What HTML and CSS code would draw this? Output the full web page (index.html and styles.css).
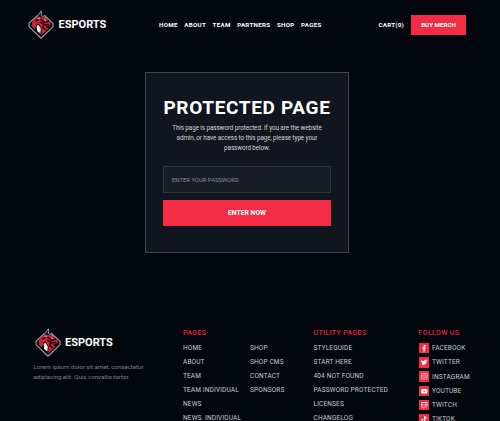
FILE: index.html
```html
<!DOCTYPE html>
<html lang="en">
<head>
<meta charset="utf-8">
<title>Esports – Protected Page</title>
<link rel="stylesheet" href="styles.css">
</head>
<body>
<svg class="defs" width="0" height="0" aria-hidden="true">
  <symbol id="crest" viewBox="0 0 26 29">
    <path d="M9.500 5.300 L1 13.200 L1 16.600 L13 28.200 L25 16.800 L25 13.400 L16 4.800" fill="#07090f" stroke="#a5a9ae" stroke-width="1.100"/>
    <path d="M9 6.500 L4.200 11.200 L4 16.500 L7 19.500 L8.500 14.500 L10.500 13.500 L13.500 18 L13.500 25 L17 22 L20.500 18.500 L17.500 17 L22.500 15 L22.600 12.500 L18.500 8.200 L13.700 6.400Z" fill="#d61f36"/>
    <path d="M9.200 6.600 L13.400.8 L13.400 5.600 L18.500 8.200" fill="#10121a" stroke="#a9abb0" stroke-width=".9"/>
    <path d="M7.500 11 L10.500 9.500 M12.500 9 L17 12.500 L21 11 M12 12 L15.500 14 L15 18 L18 20 M16.500 15 L21 14.500" fill="none" stroke="#10070c" stroke-width="1.500"/>
    <path d="M8.600 16 L10.300 14.800 L12.800 18.500 L12.400 23.500 L9.200 21Z" fill="#f3f0ed"/>
    <path d="M9.500 8.500 L12 8 M16 9.500 L18 11" stroke="#f1d6d6" stroke-width=".7"/>
  </symbol>
</svg>

<header class="header">
  <a class="brand"><svg class="crest"><use href="#crest"/></svg><span class="brand-name">ESPORTS</span></a>
  <nav class="nav"><a>HOME</a><a>ABOUT</a><a>TEAM</a><a>PARTNERS</a><a>SHOP</a><a>PAGES</a></nav>
  <div class="actions"><a class="cart">CART(0)</a><a class="buy">BUY MERCH</a></div>
</header>

<main class="main">
  <form class="card">
    <h1>PROTECTED PAGE</h1>
    <p>This page is password protected. If you are the website<br>admin, or have access to this page, please type your<br>password below.</p>
    <input class="password" type="password" placeholder="ENTER YOUR PASSWORD">
    <button class="submit" type="button">ENTER NOW</button>
  </form>
</main>

<footer class="footer">
  <section class="about">
    <a class="brand"><svg class="crest"><use href="#crest"/></svg><span class="brand-name">ESPORTS</span></a>
    <p>Lorem ipsum dolor sit amet, consectetur<br>adipiscing elit. Quis convallis tortor.</p>
  </section>
  <section class="pages">
    <h2>PAGES</h2>
    <div class="split">
      <ul><li>HOME</li><li>ABOUT</li><li>TEAM</li><li>TEAM INDIVIDUAL</li><li>NEWS</li><li>NEWS&nbsp; INDIVIDUAL</li></ul>
      <ul><li>SHOP</li><li>SHOP CMS</li><li>CONTACT</li><li>SPONSORS</li></ul>
    </div>
  </section>
  <section class="utility">
    <h2>UTILITY PAGES</h2>
    <ul><li>STYLEGUIDE</li><li>START HERE</li><li>404 NOT FOUND</li><li>PASSWORD PROTECTED</li><li>LICENSES</li><li>CHANGELOG</li></ul>
  </section>
  <section class="follow">
    <h2>FOLLOW US</h2>
    <ul class="social">
      <li><svg viewBox="0 0 10 10"><path fill="#fff" d="M4.200 8V5.400h-.9V4.300h.9v-.7c0-1.100.5-1.600 1.400-1.600h.8v1h-.5c-.4 0-.5.2-.5.6v.7h1l-.2 1.100h-.8V8z"/></svg>FACEBOOK</li>
      <li><svg viewBox="0 0 10 10"><path fill="#fff" d="M2.300 2.800c.7.8 1.600 1.200 2.600 1.300-.2-1.400 1.300-2 2.100-1.200l.8-.3-.4.8.5-.1-.6.6C7.300 6.700 4.700 8.500 2 7.200c.7 0 1.300-.2 1.700-.5-.6-.1-1-.4-1.100-.9h.5c-.6-.2-.9-.7-.9-1.200l.5.1c-.6-.5-.7-1.200-.4-1.900z"/></svg>TWITTER</li>
      <li><svg viewBox="0 0 10 10"><g fill="none" stroke="#ffe0e4" stroke-width=".65"><rect x="2.200" y="2.200" width="5.600" height="5.600" rx="1.500"/><circle cx="5" cy="5" r="1.350"/></g><circle cx="6.600" cy="3.400" r=".35" fill="#fff"/></svg>INSTAGRAM</li>
      <li><svg viewBox="0 0 10 10"><rect x="2" y="2.900" width="6" height="4.300" rx="1.100" fill="#fff"/><path fill="#f42c46" d="M4.400 4.100v1.900L6 5.050z"/></svg>YOUTUBE</li>
      <li><svg viewBox="0 0 10 10"><path fill="none" stroke="#fff" stroke-width=".7" d="M2.700 2.400h5v3.200L6.400 6.800H5.200L4 7.900V6.800H2.700zM4.700 3.700v1.500M6.200 3.700v1.500"/></svg>TWITCH</li>
      <li><svg viewBox="0 0 10 10"><path fill="none" stroke="#fff" stroke-width="1.100" d="M5.400 2v4.300a1.300 1.300 0 1 1-1.300-1.300M5.400 2.200c.2 1 .9 1.600 2 1.700"/></svg>TIKTOK</li>
    </ul>
  </section>
</footer>
</body>
</html>
```
FILE: styles.css
```css
* { box-sizing: border-box; }

body {
  margin: 0;
  height: 421px;
  overflow: hidden;
  background: #02060d;
  color: #fff;
  font-family: Roboto, "Liberation Sans", sans-serif;
}

h1, h2, p, ul { margin: 0; padding: 0; }
ul { list-style: none; }
.defs { display: block; }

.header {
  display: grid;
  grid-template-columns: 131px 1fr auto;
  align-items: center;
  height: 49px;
  padding: 0 34px 0 28px;
}

.brand { display: flex; align-items: center; }
.crest { width: 26px; height: 29px; }
.brand-name {
  margin-left: 4.500px;
  font-size: 11px;
  font-weight: 700;
  line-height: 12px;
  letter-spacing: 0;
}

.nav {
  display: flex;
  gap: 6.500px;
  font-size: 6.200px;
  font-weight: 700;
  letter-spacing: .3px;
}

.actions { display: flex; align-items: center; gap: 7px; font-size: 6.200px; font-weight: 700; }
.cart { letter-spacing: .25px; }
.buy {
  width: 55px;
  height: 20px;
  background: #f42c46;
  line-height: 20px;
  text-align: center;
}

.main { display: flex; justify-content: center; height: 279px; padding: 23px 6px 0 0; }

.card {
  width: 204px;
  height: 181px;
  padding: 23px 17px 0;
  border: 1px solid #42464d;
  background: #11151d;
}
.card h1 {
  font-size: 19px;
  line-height: 24px;
  letter-spacing: .65px;
  text-align: center;
  white-space: nowrap;
}
.card p {
  margin-top: 3px;
  color: #d5d6d8;
  font-size: 6.300px;
  line-height: 10px;
  letter-spacing: -.08px;
  text-align: center;
  white-space: nowrap;
}
.password {
  display: block;
  width: 168px;
  height: 27px;
  margin-top: 13px;
  padding: 0 8px;
  border: 1px solid #30343b;
  border-radius: 0;
  background: #191d25;
  font: 5.900px Roboto, sans-serif;
}
.password::placeholder { color: #888b90; opacity: 1; }
.submit {
  display: block;
  width: 168px;
  height: 26px;
  margin-top: 7px;
  padding: 0;
  border: 0;
  background: #f42c46;
  color: #fff;
  font: 700 6.800px Roboto, sans-serif;
}

.footer {
  display: grid;
  grid-template-columns: 149.500px 130.500px 105px 1fr;
  padding-left: 33.500px;
}
.about .brand { padding-left: 1px; }
.about p {
  margin-top: 4.500px;
  color: #7d8186;
  font-size: 6.200px;
  line-height: 10px;
  letter-spacing: -.03px;
  white-space: nowrap;
}
.footer h2 {
  color: #e52740;
  font-size: 7px;
  font-weight: 500;
  line-height: 10px;
  letter-spacing: .36px;
}
.split { display: grid; grid-template-columns: 67px 1fr; }
.footer li {
  color: #c8cacd;
  font-size: 6.500px;
  line-height: 14px;
  letter-spacing: .15px;
  white-space: nowrap;
}
.footer ul { padding-top: 3px; }
.social li { display: flex; align-items: center; height: 14.250px; gap: 3px; }
.social svg { width: 10.500px; height: 10.500px; background: #f42c46; }
```
